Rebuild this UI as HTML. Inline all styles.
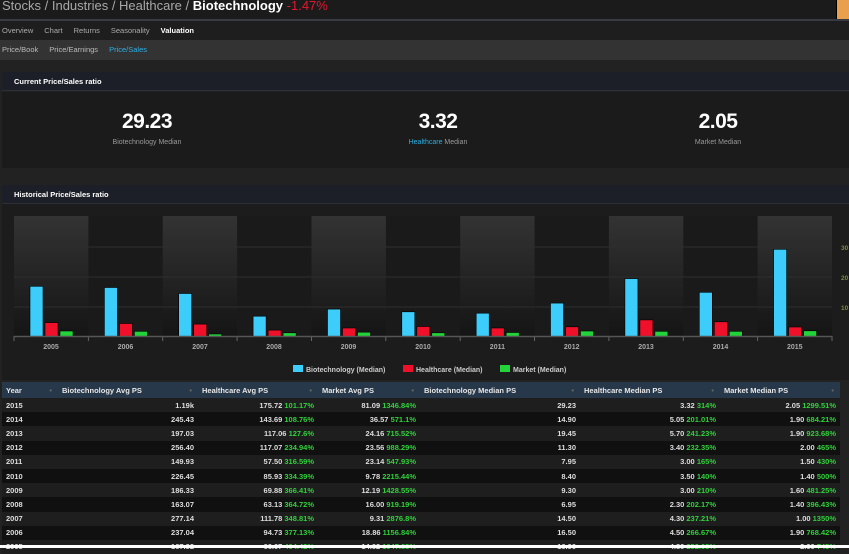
<!DOCTYPE html><html><head><style>
*{margin:0;padding:0;box-sizing:border-box}
body{width:849px;height:548px;background:#222;font-family:"Liberation Sans",Arial,sans-serif;overflow:hidden;position:relative;color:#ccc}
.a{position:absolute}
.hdr{left:0;top:0;width:849px;height:19px;background:#1b1b1b;font-size:13px;color:#a8a8a8;padding-left:2px;line-height:11px}
.nav{top:21px;left:0;width:849px;height:19px;background:#1e1e1e;font-size:7.5px;color:#aaa;line-height:19px;padding-left:2px}
.sub{top:40px;left:0;width:849px;height:20px;background:#333;font-size:7.5px;color:#bbb;line-height:20px;padding-left:2px}
.nav span,.sub span{margin-right:11px}
.ph{left:2px;width:847px;height:19px;background:#1c1f27;border-bottom:1px solid #2c2f36;font-size:7.5px;font-weight:bold;color:#fff;line-height:19px;padding-left:12px}
.stat{top:92px;left:2px;width:847px;height:76px;background:#1b1b1b}
.num{font-size:21px;font-weight:bold;color:#fff;width:200px;text-align:center;letter-spacing:-0.5px}
.lbl{font-size:7px;color:#999;width:200px;text-align:center}
table{position:absolute;left:2px;top:382px;width:838px;border-collapse:collapse;font-size:7.5px;font-weight:bold;color:#ddd}
th{background:#27384a;height:16px;text-align:left;padding-left:4px;color:#e6e6e6;font-weight:bold;position:relative}
th:after{content:"•";position:absolute;right:6px;color:#666}
td{height:14.2px;text-align:right;padding-right:4px}
td:first-child{text-align:left;padding-left:4px}
tr:nth-child(odd) td{background:#101010}
tr:nth-child(even) td{background:#1e1e1e}
g.c{color:#2fd23a}
i{font-style:normal;color:#2fd23a}
</style></head><body>
<div class="a hdr">Stocks / Industries / Healthcare / <b style="color:#fff">Biotechnology</b> <span style="color:#e3172d">-1.47%</span></div>
<div class="a" style="left:836px;top:0;width:13px;height:19px;background:#e8a04c;border-left:1px solid #000"></div>
<div class="a" style="left:0;top:19px;width:849px;height:2px;background:#393b44"></div>
<div class="a nav"><span>Overview</span><span>Chart</span><span>Returns</span><span>Seasonality</span><b style="color:#fff">Valuation</b></div>
<div class="a sub"><span>Price/Book</span><span>Price/Earnings</span><span style="color:#2ab0e6">Price/Sales</span></div>
<div class="a ph" style="top:72px">Current Price/Sales ratio</div>
<div class="a stat">
<div class="a num" style="left:45px;top:18px">29.23</div><div class="a lbl" style="left:45px;top:47px">Biotechnology Median</div>
<div class="a num" style="left:336px;top:18px">3.32</div><div class="a lbl" style="left:336px;top:47px"><span style="color:#2ab0e6">Healthcare</span> Median</div>
<div class="a num" style="left:616px;top:18px">2.05</div><div class="a lbl" style="left:616px;top:47px">Market Median</div>
</div>
<div class="a ph" style="top:185px">Historical Price/Sales ratio</div>
<div class="a" style="left:2px;top:204px;width:847px;height:176px;background:#1c1c1c"></div>
<svg class="a" style="left:0;top:0" width="849" height="382" font-family="Liberation Sans,Arial,sans-serif">
<defs><linearGradient id="gg" x1="0" y1="0" x2="0" y2="1"><stop offset="0" stop-color="#333"/><stop offset="1" stop-color="#151515"/></linearGradient></defs>
<rect x="14" y="216" width="818" height="120" fill="#1a1a1a"/>
<rect x="14" y="216" width="74.4" height="120" fill="url(#gg)"/>
<rect x="162.7" y="216" width="74.4" height="120" fill="url(#gg)"/>
<rect x="311.5" y="216" width="74.4" height="120" fill="url(#gg)"/>
<rect x="460.2" y="216" width="74.4" height="120" fill="url(#gg)"/>
<rect x="608.9" y="216" width="74.4" height="120" fill="url(#gg)"/>
<rect x="757.6" y="216" width="74.4" height="120" fill="url(#gg)"/>
<g stroke="#2e2e2e"><line x1="14" x2="832" y1="247" y2="247"/><line x1="14" x2="832" y1="277" y2="277"/><line x1="14" x2="832" y1="307" y2="307"/></g>
<g stroke="#000" stroke-width="0.6">
<g transform="translate(14,0)"><rect x="16" y="286.3" width="13" height="50.7" fill="#3ccdfa"/><rect x="31" y="322.6" width="13" height="14.4" fill="#f0102a"/><rect x="46" y="331" width="13" height="6" fill="#22d43a"/></g>
<g transform="translate(88.4,0)"><rect x="16" y="287.5" width="13" height="49.5" fill="#3ccdfa"/><rect x="31" y="323.5" width="13" height="13.5" fill="#f0102a"/><rect x="46" y="331.3" width="13" height="5.7" fill="#22d43a"/></g>
<g transform="translate(162.7,0)"><rect x="16" y="293.5" width="13" height="43.5" fill="#3ccdfa"/><rect x="31" y="324.1" width="13" height="12.9" fill="#f0102a"/><rect x="46" y="334" width="13" height="3" fill="#22d43a"/></g>
<g transform="translate(237.1,0)"><rect x="16" y="316.2" width="13" height="20.8" fill="#3ccdfa"/><rect x="31" y="330.1" width="13" height="6.9" fill="#f0102a"/><rect x="46" y="332.8" width="13" height="4.2" fill="#22d43a"/></g>
<g transform="translate(311.5,0)"><rect x="16" y="309.1" width="13" height="27.9" fill="#3ccdfa"/><rect x="31" y="328" width="13" height="9" fill="#f0102a"/><rect x="46" y="332.2" width="13" height="4.8" fill="#22d43a"/></g>
<g transform="translate(385.8,0)"><rect x="16" y="311.8" width="13" height="25.2" fill="#3ccdfa"/><rect x="31" y="326.5" width="13" height="10.5" fill="#f0102a"/><rect x="46" y="332.8" width="13" height="4.2" fill="#22d43a"/></g>
<g transform="translate(460.2,0)"><rect x="16" y="313.2" width="13" height="23.8" fill="#3ccdfa"/><rect x="31" y="328" width="13" height="9" fill="#f0102a"/><rect x="46" y="332.5" width="13" height="4.5" fill="#22d43a"/></g>
<g transform="translate(534.5,0)"><rect x="16" y="303.1" width="13" height="33.9" fill="#3ccdfa"/><rect x="31" y="326.8" width="13" height="10.2" fill="#f0102a"/><rect x="46" y="331" width="13" height="6" fill="#22d43a"/></g>
<g transform="translate(608.9,0)"><rect x="16" y="278.6" width="13" height="58.4" fill="#3ccdfa"/><rect x="31" y="319.9" width="13" height="17.1" fill="#f0102a"/><rect x="46" y="331.3" width="13" height="5.7" fill="#22d43a"/></g>
<g transform="translate(683.3,0)"><rect x="16" y="292.3" width="13" height="44.7" fill="#3ccdfa"/><rect x="31" y="321.8" width="13" height="15.2" fill="#f0102a"/><rect x="46" y="331.3" width="13" height="5.7" fill="#22d43a"/></g>
<g transform="translate(757.6,0)"><rect x="16" y="249.3" width="13" height="87.7" fill="#3ccdfa"/><rect x="31" y="327" width="13" height="10" fill="#f0102a"/><rect x="46" y="330.8" width="13" height="6.2" fill="#22d43a"/></g>
</g>
<g stroke="#666"><line x1="14" x2="14" y1="336" y2="341"/><line x1="88.4" x2="88.4" y1="336" y2="341"/><line x1="162.7" x2="162.7" y1="336" y2="341"/><line x1="237.1" x2="237.1" y1="336" y2="341"/><line x1="311.5" x2="311.5" y1="336" y2="341"/><line x1="385.8" x2="385.8" y1="336" y2="341"/><line x1="460.2" x2="460.2" y1="336" y2="341"/><line x1="534.5" x2="534.5" y1="336" y2="341"/><line x1="608.9" x2="608.9" y1="336" y2="341"/><line x1="683.3" x2="683.3" y1="336" y2="341"/><line x1="757.6" x2="757.6" y1="336" y2="341"/><line x1="832" x2="832" y1="336" y2="341"/></g>
<line x1="14" x2="832" y1="336.5" y2="336.5" stroke="#555" stroke-width="1.5"/>
<g font-size="7" font-weight="bold" fill="#aaa" text-anchor="middle">
<text x="51" y="349">2005</text><text x="125.5" y="349">2006</text><text x="200" y="349">2007</text><text x="274" y="349">2008</text><text x="348.5" y="349">2009</text><text x="423" y="349">2010</text><text x="497.4" y="349">2011</text><text x="571.7" y="349">2012</text><text x="646" y="349">2013</text><text x="720.5" y="349">2014</text><text x="794.8" y="349">2015</text>
</g>
<g font-size="6.5" font-weight="bold" fill="#7a8a3a"><text x="841" y="250">30</text><text x="841" y="280">20</text><text x="841" y="310">10</text></g>
<rect x="293" y="365" width="10" height="7" fill="#3ccdfa"/><text x="306" y="372" font-size="7" font-weight="bold" fill="#ccc">Biotechnology (Median)</text>
<rect x="403" y="365" width="10" height="7" fill="#f0102a"/><text x="416" y="372" font-size="7" font-weight="bold" fill="#ccc">Healthcare (Median)</text>
<rect x="500" y="365" width="10" height="7" fill="#22d43a"/><text x="513" y="372" font-size="7" font-weight="bold" fill="#ccc">Market (Median)</text>
</svg>
<table>
<tr><th style="width:56px">Year</th><th style="width:140px">Biotechnology Avg PS</th><th style="width:120px">Healthcare Avg PS</th><th style="width:102px">Market Avg PS</th><th style="width:160px">Biotechnology Median PS</th><th style="width:140px">Healthcare Median PS</th><th>Market Median PS</th></tr>
<tr><td>2015</td><td>1.19k</td><td>175.72 <i>101.17%</i></td><td>81.09 <i>1346.84%</i></td><td>29.23</td><td>3.32 <i>314%</i></td><td>2.05 <i>1299.51%</i></td></tr>
<tr><td>2014</td><td>245.43</td><td>143.69 <i>108.76%</i></td><td>36.57 <i>571.1%</i></td><td>14.90</td><td>5.05 <i>201.01%</i></td><td>1.90 <i>684.21%</i></td></tr>
<tr><td>2013</td><td>197.03</td><td>117.06 <i>127.6%</i></td><td>24.16 <i>715.52%</i></td><td>19.45</td><td>5.70 <i>241.23%</i></td><td>1.90 <i>923.68%</i></td></tr>
<tr><td>2012</td><td>256.40</td><td>117.07 <i>234.94%</i></td><td>23.56 <i>988.29%</i></td><td>11.30</td><td>3.40 <i>232.35%</i></td><td>2.00 <i>465%</i></td></tr>
<tr><td>2011</td><td>149.93</td><td>57.50 <i>316.59%</i></td><td>23.14 <i>547.93%</i></td><td>7.95</td><td>3.00 <i>165%</i></td><td>1.50 <i>430%</i></td></tr>
<tr><td>2010</td><td>226.45</td><td>85.93 <i>334.39%</i></td><td>9.78 <i>2215.44%</i></td><td>8.40</td><td>3.50 <i>140%</i></td><td>1.40 <i>500%</i></td></tr>
<tr><td>2009</td><td>186.33</td><td>69.88 <i>366.41%</i></td><td>12.19 <i>1428.55%</i></td><td>9.30</td><td>3.00 <i>210%</i></td><td>1.60 <i>481.25%</i></td></tr>
<tr><td>2008</td><td>163.07</td><td>63.13 <i>364.72%</i></td><td>16.00 <i>919.19%</i></td><td>6.95</td><td>2.30 <i>202.17%</i></td><td>1.40 <i>396.43%</i></td></tr>
<tr><td>2007</td><td>277.14</td><td>111.78 <i>348.81%</i></td><td>9.31 <i>2876.8%</i></td><td>14.50</td><td>4.30 <i>237.21%</i></td><td>1.00 <i>1350%</i></td></tr>
<tr><td>2006</td><td>237.04</td><td>94.73 <i>377.13%</i></td><td>18.86 <i>1156.84%</i></td><td>16.50</td><td>4.50 <i>266.67%</i></td><td>1.90 <i>768.42%</i></td></tr>
<tr><td>2005</td><td>167.92</td><td>66.07 <i>404.42%</i></td><td>14.62 <i>1047.88%</i></td><td>16.90</td><td>4.80 <i>252.08%</i></td><td>2.00 <i>745%</i></td></tr>
</table>
<div class="a" style="left:0;top:545px;width:849px;height:3px;background:#fff"></div>
</body></html>
